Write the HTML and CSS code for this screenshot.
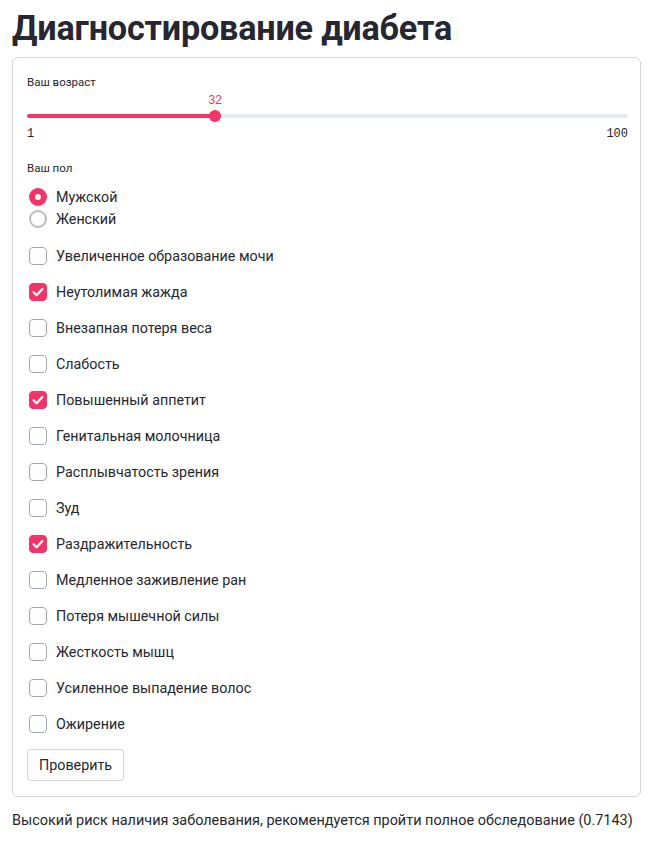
FILE: index.html
```html
<!DOCTYPE html>
<html lang="ru">
<head>
<meta charset="utf-8">
<link rel="stylesheet" href="styles.css">
</head>
<body>
<main class="page">
  <h1 class="title">Диагностирование диабета</h1>
  <form class="form">
    <div class="widget-label">Ваш возраст</div>
    <div class="slider">
      <div class="slider-value-row">
        <span class="slider-value" style="left: 31.31%">32</span>
      </div>
      <div class="track">
        <div class="track-fill" style="width: 31.31%"></div>
        <div class="thumb" style="left: 31.31%"></div>
      </div>
      <div class="slider-minmax"><span>1</span><span>100</span></div>
    </div>
    <div class="widget-label gender-label">Ваш пол</div>
    <div class="radio-group">
      <label class="radio"><span class="radio-dot checked"></span><span>Мужской</span></label>
      <label class="radio"><span class="radio-dot"></span><span>Женский</span></label>
    </div>
    <div class="checks">
      <label class="check"><span class="box"></span><span>Увеличенное образование мочи</span></label>
      <label class="check"><span class="box checked"><svg viewBox="0 0 16 16"><path d="M3.6 8.3 L6.6 11.2 L12.4 5" /></svg></span><span>Неутолимая жажда</span></label>
      <label class="check"><span class="box"></span><span>Внезапная потеря веса</span></label>
      <label class="check"><span class="box"></span><span>Слабость</span></label>
      <label class="check"><span class="box checked"><svg viewBox="0 0 16 16"><path d="M3.6 8.3 L6.6 11.2 L12.4 5" /></svg></span><span>Повышенный аппетит</span></label>
      <label class="check"><span class="box"></span><span>Генитальная молочница</span></label>
      <label class="check"><span class="box"></span><span>Расплывчатость зрения</span></label>
      <label class="check"><span class="box"></span><span>Зуд</span></label>
      <label class="check"><span class="box checked"><svg viewBox="0 0 16 16"><path d="M3.6 8.3 L6.6 11.2 L12.4 5" /></svg></span><span>Раздражительность</span></label>
      <label class="check"><span class="box"></span><span>Медленное заживление ран</span></label>
      <label class="check"><span class="box"></span><span>Потеря мышечной силы</span></label>
      <label class="check"><span class="box"></span><span>Жесткость мышц</span></label>
      <label class="check"><span class="box"></span><span>Усиленное выпадение волос</span></label>
      <label class="check"><span class="box"></span><span>Ожирение</span></label>
    </div>
    <button type="button" class="btn">Проверить</button>
  </form>
  <p class="result">Высокий риск наличия заболевания, рекомендуется пройти полное обследование (0.7143)</p>
</main>
</body>
</html>
```

FILE: styles.css
```css
* { box-sizing: border-box; }
html, body { margin: 0; padding: 0; background: #fff; }
body {
  font-family: "Roboto", "Liberation Sans", sans-serif;
  color: #262730;
}
.page {
  padding: 0 12px 0 12px;
  width: 654px;
}
.title {
  margin: 0;
  padding: 6px 0 0 0;
  height: 57px;
  font-size: 34.2px;
  font-weight: 700;
  line-height: 44px;
  letter-spacing: -0.2px;
}
.form {
  width: 629px;
  border: 1px solid rgba(49, 51, 63, 0.2);
  border-radius: 6px;
  padding: 16px 12px 15px 14px;
  display: flex;
  flex-direction: column;
}
.widget-label {
  font-size: 11.5px;
  line-height: 16px;
  height: 18px;
}
.slider-value-row {
  position: relative;
  height: 16px;
}
.slider-value {
  position: absolute;
  top: 0;
  transform: translateX(-50%);
  font-size: 12px;
  line-height: 16px;
  color: #f63366;
  font-family: "Liberation Sans", sans-serif;
}
.track {
  position: relative;
  height: 4px;
  margin-top: 6px;
  background: #e6e9ef;
  border-radius: 2px;
}
.track-fill {
  height: 4px;
  background: #f63366;
  border-radius: 2px;
}
.thumb {
  position: absolute;
  top: -4px;
  width: 12px;
  height: 12px;
  margin-left: -6px;
  border-radius: 50%;
  background: #f63366;
}
.slider-minmax {
  display: flex;
  justify-content: space-between;
  font-family: "Liberation Mono", "DejaVu Sans Mono", monospace;
  font-size: 12px;
  line-height: 16px;
  margin-top: 8px;
  color: #262730;
}
.gender-label { margin-top: 18px; }
.radio-group {
  display: flex;
  flex-direction: column;
  margin-top: 8px;
}
.radio {
  display: flex;
  align-items: center;
  height: 22px;
  font-size: 14.3px;
}
.radio-dot {
  width: 18px;
  height: 18px;
  border-radius: 50%;
  border: 2px solid #bbbcc0;
  margin: 0 9px 0 2px;
  flex: none;
}
.radio-dot.checked {
  border: 6px solid #f63366;
  background: #fff;
}
.checks {
  display: flex;
  flex-direction: column;
  margin-top: 8px;
}
.check {
  display: flex;
  align-items: center;
  height: 36px;
  font-size: 14.3px;
}
.box {
  width: 18px;
  height: 18px;
  border: 1px solid #a3a8b4;
  border-radius: 4px;
  margin: 0 9px 0 2px;
  flex: none;
  display: flex;
  align-items: center;
  justify-content: center;
}
.box.checked {
  background: #f63366;
  border-color: #f63366;
}
.box svg {
  width: 16px;
  height: 16px;
  fill: none;
  stroke: #fff;
  stroke-width: 2.2;
  stroke-linecap: round;
  stroke-linejoin: round;
}
.btn {
  align-self: flex-start;
  margin-top: 7px;
  height: 32px;
  padding: 0 11px;
  background: #fff;
  border: 1px solid rgba(49, 51, 63, 0.2);
  border-radius: 4px;
  font-family: "Roboto", "Liberation Sans", sans-serif;
  font-size: 14.3px;
  color: #262730;
}
.result {
  margin: 14px 0 0 0;
  font-size: 14.45px;
  line-height: 20px;
  white-space: nowrap;
}
```
